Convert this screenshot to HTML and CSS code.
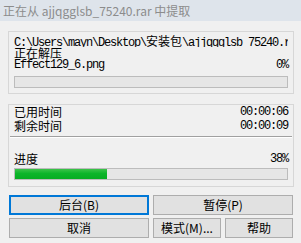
FILE: index.html
```html
<!DOCTYPE html>
<html>
<head>
<meta charset="utf-8">
<link rel="stylesheet" href="styles.css">
</head>
<body>
<div class="window">
  <div class="titlebar">正在从 ajjqgglsb_75240.rar 中提取</div>
  <div class="content">
    <div class="panel panel-file">
      <div class="path mono">C:\Users\mayn\Desktop\<span class="cjk-mono">安装包</span>\ajjqgglsb_75240.rar</div>
      <div class="label">正在解压</div>
      <div class="row">
        <span class="mono">Effect129_6.png</span>
        <span class="mono">0%</span>
      </div>
      <div class="bar"></div>
    </div>
    <div class="panel panel-time">
      <div class="times">
        <div class="trow"><span class="label">已用时间</span><span class="mono">00:00:06</span></div>
        <div class="trow"><span class="label">剩余时间</span><span class="mono">00:00:09</span></div>
      </div>
      <div class="sep"></div>
      <div class="progress">
        <div class="prow"><span class="label">进度</span><span class="mono">38%</span></div>
        <div class="bar"><div class="fill" style="width:34%"></div></div>
      </div>
    </div>
    <div class="buttons">
      <button class="btn focus">后台(B)</button>
      <button class="btn">暂停(P)</button>
      <button class="btn">取消</button>
      <div class="pair">
        <button class="btn">模式(M)...</button>
        <button class="btn">帮助</button>
      </div>
    </div>
  </div>
</div>
</body>
</html>
```
FILE: styles.css
```css
html, body {
  margin: 0;
  padding: 0;
}
body {
  width: 301px;
  height: 243px;
  background: #f0f0f0;
  overflow: hidden;
  font-family: "Noto Sans CJK SC", "Liberation Sans", sans-serif;
  font-size: 12px;
  color: #000;
}
.titlebar {
  height: 21px;
  line-height: 21px;
  padding-left: 3px;
  background: #dee4eb;
  color: #8c8c8c;
  font-family: "Noto Sans CJK SC", sans-serif;
  font-size: 12px;
  white-space: nowrap;
}
.content {
  padding: 10px 8px 0 8px;
}
.panel {
  width: 286px;
  box-sizing: border-box;
  border: 1px solid #d7d7d7;
}
.panel-file {
  padding: 2px 5px 5px 5px;
}
.mono {
  font-family: "Liberation Mono", monospace;
  font-size: 12px;
  letter-spacing: -1.2px;
}
.cjk-mono {
  font-family: "Noto Sans CJK SC", sans-serif;
  font-size: 12px;
  letter-spacing: 0;
}
.path {
  height: 13px;
  line-height: 13px;
  white-space: nowrap;
  overflow: hidden;
  width: 274px;
}
.label {
  font-family: "Noto Sans CJK SC", sans-serif;
  font-size: 12px;
}
.panel-file .label {
  display: block;
  height: 12px;
  line-height: 12px;
}
.row {
  display: flex;
  justify-content: space-between;
  height: 12px;
  line-height: 12px;
}
.bar {
  margin-top: 5px;
  height: 12px;
  box-sizing: border-box;
  border: 1px solid #bcbcbc;
  background: #e6e6e6;
}
.fill {
  height: 100%;
  background: linear-gradient(to bottom, #3cc34a 0%, #0cb52a 45%, #06ad22 100%);
}
.panel-time {
  margin-top: 10px;
  padding-bottom: 6px;
}
.times {
  padding: 0 5px 0 5px;
}
.trow, .prow {
  display: flex;
  justify-content: space-between;
  height: 14px;
  line-height: 14px;
}
.sep {
  margin: 3px 1px 0 1px;
  height: 1px;
  background: #a0a0a0;
  border-bottom: 1px solid #ffffff;
}
.progress {
  padding: 14px 5px 0 5px;
}
.progress .bar {
  margin-top: 2px;
}
.buttons {
  margin-top: 8px;
  margin-left: 1px;
  display: grid;
  grid-template-columns: 140px 140px;
  column-gap: 4px;
  row-gap: 3px;
}
.btn {
  height: 20px;
  margin: 0;
  padding: 0;
  box-sizing: border-box;
  border: 1px solid #adadad;
  background: #e1e1e1;
  font-family: "Noto Sans CJK SC", sans-serif;
  font-size: 12px;
  line-height: 16px;
  color: #000;
  white-space: nowrap;
}
.btn.focus {
  border: 2px solid #0078d7;
}
.pair {
  display: grid;
  grid-template-columns: 68px 68px;
  column-gap: 4px;
}
```
